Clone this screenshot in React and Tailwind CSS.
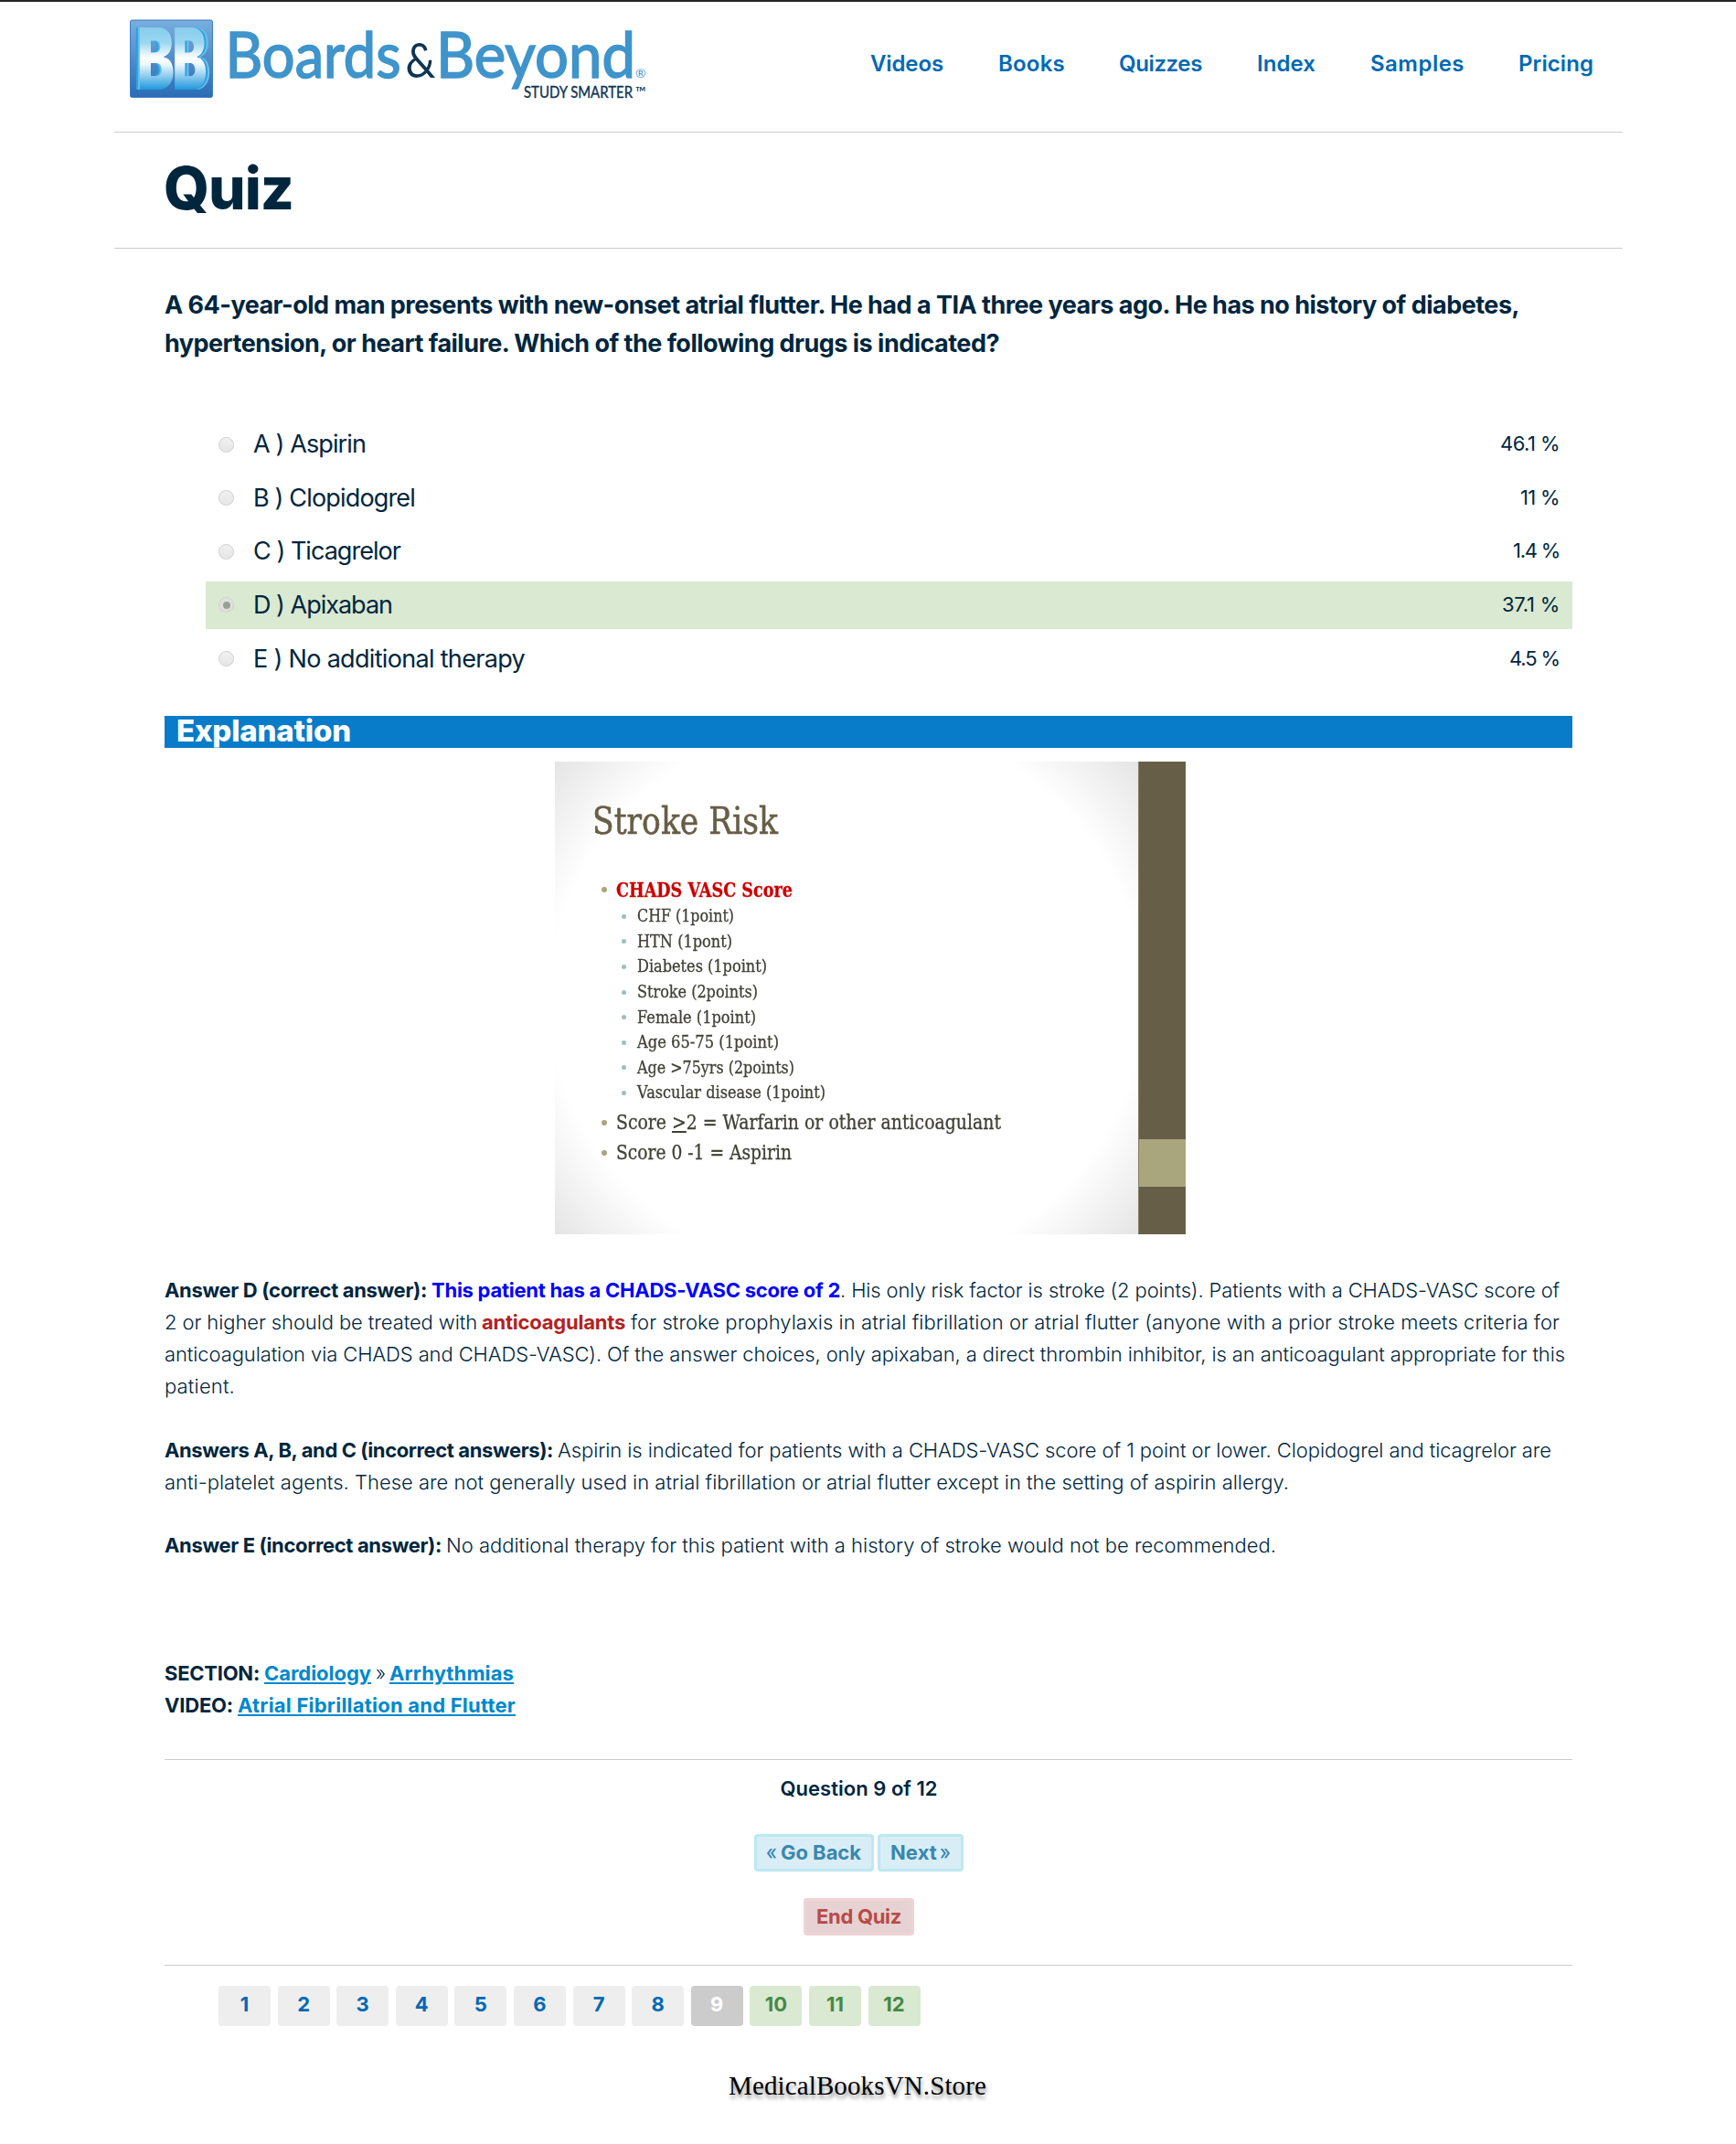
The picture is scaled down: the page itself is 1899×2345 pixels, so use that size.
import { useLayoutEffect, useRef } from "react";

const INK = "text-[#00263e]";

// Text run with a fixed advance width: "track" spreads letters, "stretch" scales them.
function Fit({ w, mode = "track", className = "", children }) {
  const ref = useRef(null);
  useLayoutEffect(() => {
    const el = ref.current;
    el.style.letterSpacing = "0px";
    el.style.transform = "none";
    const natural = el.getBoundingClientRect().width;
    if (mode === "stretch") {
      el.style.transform = `scaleX(${w / natural})`;
    } else {
      el.style.letterSpacing = `${(w - natural) / el.textContent.length}px`;
    }
  }, [w, mode]);
  return (
    <span className="inline-block shrink-0 whitespace-nowrap" style={{ width: w }}>
      <span ref={ref} className={`inline-block origin-left whitespace-nowrap ${className}`}>
        {children}
      </span>
    </span>
  );
}

function Logo() {
  return (
    <svg width="580" height="100" viewBox="136 14 580 100" className="block" fontFamily="Lato, sans-serif">
      <defs>
        <linearGradient id="tile" x1="0" y1="0" x2="0" y2="1">
          <stop offset="0" stopColor="#78aee0" />
          <stop offset="1" stopColor="#2b6cb5" />
        </linearGradient>
        <linearGradient id="face" gradientUnits="userSpaceOnUse" x1="0" y1="29" x2="0" y2="98">
          <stop offset="0" stopColor="#86cdec" />
          <stop offset="0.25" stopColor="#9ad6f0" />
          <stop offset="0.5" stopColor="#ffffff" />
          <stop offset="0.6" stopColor="#eef8fd" />
          <stop offset="1" stopColor="#1f98dc" />
        </linearGradient>
      </defs>
      <rect x="142.5" y="22" width="90" height="84.500" rx="2" fill="url(#tile)" stroke="#3f7fc4" />
      <g fontFamily="Inter, sans-serif" fontWeight="900" fontSize="94" fill="url(#face)">
        <text x="150" y="98" textLength="41" lengthAdjust="spacingAndGlyphs" className="[filter:drop-shadow(-2px_0.5px_0_#5fc0ea)_drop-shadow(-2px_0.5px_0_#2a9fe0)]">B</text>
        <text x="188.500" y="98" textLength="38" lengthAdjust="spacingAndGlyphs" className="[filter:drop-shadow(2px_0.5px_0_#2a9fe0)_drop-shadow(2px_0.5px_0_#6cc3ea)]">B</text>
      </g>
      <g fontSize="69" fill="#3f94cb" stroke="#3f94cb" strokeWidth="1.700">
        <text x="246.500" y="85" textLength="192" lengthAdjust="spacingAndGlyphs">Boards</text>
        <text x="477" y="85" textLength="218" lengthAdjust="spacingAndGlyphs">Beyond</text>
      </g>
      <text x="443.500" y="85" fontSize="53" fill="#0f3554" textLength="33" lengthAdjust="spacingAndGlyphs">&amp;</text>
      <text x="695" y="85" fontSize="14" fill="#3f94cb">®</text>
      <text x="573" y="106.500" fontSize="18" fill="#0f3554" stroke="#0f3554" strokeWidth="0.400" textLength="119" lengthAdjust="spacingAndGlyphs">STUDY SMARTER</text>
      <text x="695" y="106.500" fontSize="17" fill="#0f3554" textLength="12" lengthAdjust="spacingAndGlyphs">™</text>
    </svg>
  );
}

const NAV = [
  ["Videos", 80, "mr-[60px]"],
  ["Books", 73, "mr-[59px]"],
  ["Quizzes", 91, "mr-[60px]"],
  ["Index", 64, "mr-[60px]"],
  ["Samples", 103, "mr-[59px]"],
  ["Pricing", 82, ""],
];

const OPTIONS = [
  ["A ) Aspirin", 123, "46.1 %", 65],
  ["B ) Clopidogrel", 177, "11 %", 43],
  ["C ) Ticagrelor", 161, "1.4 %", 51],
  ["D ) Apixaban", 152, "37.1 %", 63],
  ["E ) No additional therapy", 297, "4.5 %", 55],
];

const CRITERIA = [
  ["CHF (1point)", 106],
  ["HTN (1pont)", 104],
  ["Diabetes (1point)", 142],
  ["Stroke (2points)", 132],
  ["Female (1point)", 130],
  ["Age 65-75 (1point)", 155],
  ["Age >75yrs (2points)", 172],
  ["Vascular disease (1point)", 206],
];

function Radio({ checked }) {
  return (
    <span className={`flex size-[17px] items-center justify-center rounded-full border border-[#cfcfcf] ${checked ? "bg-[#dde3d9]" : "bg-linear-to-b from-[#f0f0f0] to-[#e6e6e6]"}`}>
      {checked && <span className="size-[8px] rounded-full bg-[#9a9f98]" />}
    </span>
  );
}

function Slide() {
  return (
    <div className="ml-[427px] mt-[15px] flex h-[517px] w-[690px] font-['DejaVu_Serif'] text-[#404036] [-webkit-text-stroke:0.3px]">
      <div className="flex-1 bg-[radial-gradient(ellipse_62%_72%_at_50%_50%,#ffffff_0%,#ffffff_82%,#d8d8d8_118%)] pt-[41px]">
        <div className="pl-[41px] text-[41px] leading-[48px] text-[#675e47] [-webkit-text-stroke:0.6px]">
          <Fit w={203} mode="stretch">Stroke Risk</Fit>
        </div>
        <div className="mt-[36px] flex h-[31px] items-center pl-[51px] text-[21.500px] leading-[29px]">
          <span className="mr-[10px] size-[6px] rounded-full bg-[#a9a57c]" />
          <Fit w={193} mode="stretch" className="font-bold text-[#cc0000]">CHADS VASC Score</Fit>
        </div>
        {CRITERIA.map(([label, w]) => (
          <div key={label} className="flex h-[27.550px] items-center pl-[73px] text-[18.500px] leading-[26px]">
            <span className="mr-[12px] size-[5px] rounded-full bg-[#9cbebd]" />
            <Fit w={w} mode="stretch">{label}</Fit>
          </div>
        ))}
        <div className="mt-[2px] flex h-[33px] items-center pl-[51px] text-[21.500px] leading-[31px]">
          <span className="mr-[10px] size-[6px] rounded-full bg-[#a9a57c]" />
          <Fit w={421} mode="stretch">
            Score <span className="underline underline-offset-2">&gt;</span>2 = Warfarin or other anticoagulant
          </Fit>
        </div>
        <div className="flex h-[33px] items-center pl-[51px] text-[21.500px] leading-[31px]">
          <span className="mr-[10px] size-[6px] rounded-full bg-[#a9a57c]" />
          <Fit w={192} mode="stretch">Score 0 -1 = Aspirin</Fit>
        </div>
      </div>
      <div className="flex w-[52px] flex-col border-l border-[#857e6c] bg-[#675e47]">
        <div className="mt-[413px] h-[52px] bg-[#a9a57c]" />
      </div>
    </div>
  );
}

function Explanation() {
  return (
    <div className="mt-[44px] text-[22px] font-light leading-[35px]">
      <p className="flex">
        <Fit w={287} className="font-bold">Answer D (correct answer):</Fit>
        <span className="w-[5px]" />
        <Fit w={447} className="font-bold text-[#0000ff]">This patient has a CHADS-VASC score of 2</Fit>
        <Fit w={787}>. His only risk factor is stroke (2 points). Patients with a CHADS-VASC score of</Fit>
      </p>
      <p className="flex">
        <Fit w={342}>2 or higher should be treated with</Fit>
        <span className="w-[5px]" />
        <Fit w={157} className="font-bold text-[#b22222]">anticoagulants</Fit>
        <span className="w-[6px]" />
        <Fit w={1016}>
          for stroke prophylaxis in atrial fibrillation or atrial flutter (anyone with a prior stroke meets criteria for
        </Fit>
      </p>
      <p>
        <Fit w={1532}>
          anticoagulation via CHADS and CHADS-VASC). Of the answer choices, only apixaban, a direct thrombin inhibitor, is an anticoagulant appropriate for this
        </Fit>
      </p>
      <p>
        <Fit w={77}>patient.</Fit>
      </p>
      <p className="mt-[35px] flex">
        <Fit w={425} className="font-bold">Answers A, B, and C (incorrect answers):</Fit>
        <span className="w-[5px]" />
        <Fit w={1087}>
          Aspirin is indicated for patients with a CHADS-VASC score of 1 point or lower. Clopidogrel and ticagrelor are
        </Fit>
      </p>
      <p>
        <Fit w={1230}>
          anti-platelet agents. These are not generally used in atrial fibrillation or atrial flutter except in the setting of aspirin allergy.
        </Fit>
      </p>
      <p className="mt-[34px] flex">
        <Fit w={303} className="font-bold">Answer E (incorrect answer):</Fit>
        <span className="w-[5px]" />
        <Fit w={908}>No additional therapy for this patient with a history of stroke would not be recommended.</Fit>
      </p>
      <p className="mt-[105px] flex">
        <Fit w={104} className="font-bold">SECTION:</Fit>
        <span className="w-[5px]" />
        <Fit w={117} className="font-bold text-[#0088cc] underline decoration-2 underline-offset-2">Cardiology</Fit>
        <span className="w-[5px]" />
        <Fit w={11} mode="stretch">»</Fit>
        <span className="w-[4px]" />
        <Fit w={136} className="font-bold text-[#0088cc] underline decoration-2 underline-offset-2">Arrhythmias</Fit>
      </p>
      <p className="flex">
        <Fit w={75} className="font-bold">VIDEO:</Fit>
        <span className="w-[5px]" />
        <Fit w={304} className="font-bold text-[#0088cc] underline decoration-2 underline-offset-2">
          Atrial Fibrillation and Flutter
        </Fit>
      </p>
    </div>
  );
}

function pageStyle(n) {
  if (n === 9) return "bg-[#cccccc] text-white";
  if (n > 9) return "bg-[#dae9d1] text-[#468847]";
  return "bg-[#eeeeee] text-[#0069b4]";
}

export default function App() {
  return (
    <div className={`h-[2345px] w-[1899px] overflow-hidden border-t-2 border-[#262424] bg-white font-[Inter,sans-serif] ${INK}`}>
      <div className="ml-[125px] w-[1650px]">
        <header className="flex h-[143px] border-b border-[#cccccc]">
          <div className="ml-[11px] mt-[12px] w-[816px]">
            <Logo />
          </div>
          <nav className="mt-[49px] flex text-[24px] font-semibold leading-[38px] text-[#0069b4]">
            {NAV.map(([label, w, gap]) => (
              <a key={label} className={gap}>
                <Fit w={w}>{label}</Fit>
              </a>
            ))}
          </nav>
        </header>
        <div className="h-[127px] border-b border-[#cccccc] pl-[54px] pt-[29px]">
          <h1 className="text-[64px] font-extrabold leading-[64px]">
            <Fit w={142}>Quiz</Fit>
          </h1>
        </div>
        <main className="pl-[55px] pr-[55px] pt-[41px]">
          <div className="text-[27px] font-bold leading-[42px]">
            <Fit w={1482}>
              A 64-year-old man presents with new-onset atrial flutter. He had a TIA three years ago. He has no history of diabetes,
            </Fit>
            <Fit w={913}>hypertension, or heart failure. Which of the following drugs is indicated?</Fit>
          </div>

          <div className="ml-[45px] mt-[63px] flex flex-col gap-[6.670px]">
            {OPTIONS.map(([label, w, pct, pw], i) => (
              <div key={label} className={`flex h-[52px] items-center pl-[14px] pr-[14px] ${i === 3 ? "bg-[#dae9d1]" : ""}`}>
                <Radio checked={i === 3} />
                <span className="ml-[21px] flex-1 text-[27px] leading-[50px]">
                  <Fit w={w}>{label}</Fit>
                </span>
                <span className="pb-[2px] text-[22px] leading-[50px]">
                  <Fit w={pw}>{pct}</Fit>
                </span>
              </div>
            ))}
          </div>

          <h2 className="mt-[36px] h-[35px] overflow-hidden bg-[#087cc8] pl-[13px] text-[33px] font-extrabold leading-[32px] text-white">
            <Fit w={191}>Explanation</Fit>
          </h2>

          <Slide />
          <Explanation />

          <div className="mt-[41px] flex flex-col items-center border-y border-[#cccccc] pb-[32px] pr-[21px] pt-[14px] text-[22px] font-bold">
            <div className="font-semibold leading-[35px]">
              <Fit w={172}>Question 9 of 12</Fit>
            </div>
            <div className="mt-[32px] flex gap-[4px] leading-[35px] text-[#3a87ad]">
              <div className="flex h-[41px] w-[131px] rounded-[4px] border-3 border-[#bce8f1] bg-[#d9edf7] pl-[10px]">
                <Fit w={12} mode="stretch" className="font-medium">«</Fit>
                <span className="w-[4px]" />
                <Fit w={88}>Go Back</Fit>
              </div>
              <div className="flex h-[41px] w-[94px] rounded-[4px] border-3 border-[#bce8f1] bg-[#d9edf7] pl-[11px]">
                <Fit w={51}>Next</Fit>
                <span className="w-[3px]" />
                <Fit w={12} mode="stretch" className="font-medium">»</Fit>
              </div>
            </div>
            <div className="mt-[29px] h-[41px] w-[121px] rounded-[4px] border-3 border-[#eed3d7] bg-[#e6d2d3] pl-[11px] leading-[35px] text-[#b94a48]">
              <Fit w={93}>End Quiz</Fit>
            </div>
          </div>

          <div className="ml-[59px] mt-[22px] flex gap-[7.600px]">
            {[1, 2, 3, 4, 5, 6, 7, 8, 9, 10, 11, 12].map((n) => (
              <span
                key={n}
                className={`h-[44px] w-[57px] rounded-[4px] text-center text-[22px] font-bold leading-[41px] ${pageStyle(n)}`}
              >
                {n}
              </span>
            ))}
          </div>

          <div className="ml-[617px] mt-[47px] font-['Liberation_Serif'] text-[29px] leading-[36px] text-black [text-shadow:1px_4px_4px_rgba(0,0,0,0.45)]">
            <Fit w={282}>MedicalBooksVN.Store</Fit>
          </div>
        </main>
      </div>
    </div>
  );
}
